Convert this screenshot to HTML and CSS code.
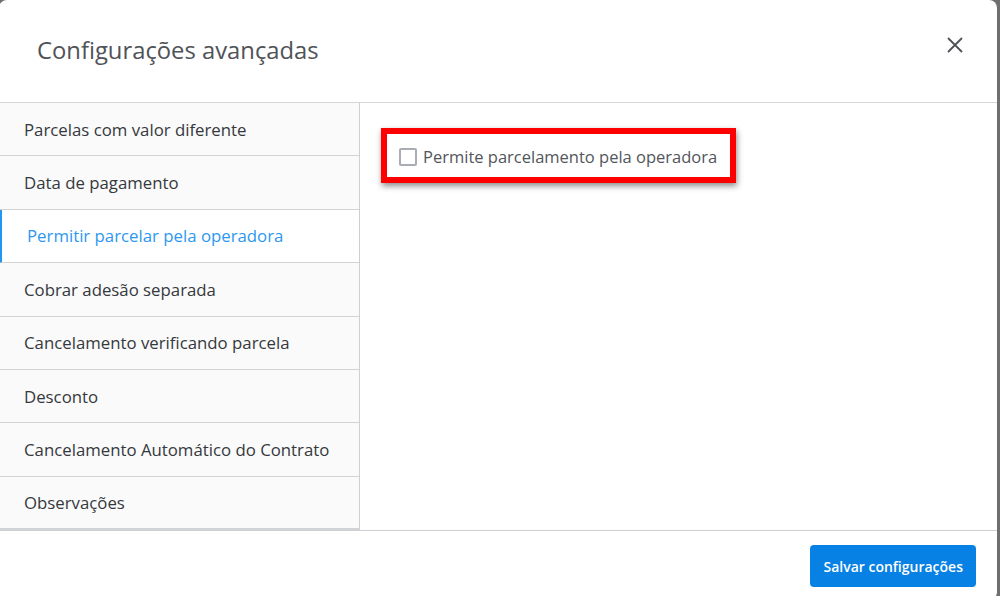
FILE: index.html
```html
<!DOCTYPE html>
<html lang="pt-BR">
<head>
<meta charset="utf-8">
<link rel="stylesheet" href="styles.css">
</head>
<body>
<div class="modal">
  <header class="modal-header">
    <h1 class="modal-title">Configurações avançadas</h1>
    <button class="close" aria-label="Fechar">
      <svg width="16" height="16" viewBox="0 0 16 16"><path d="M1.5 1.5L14.5 14.5M14.5 1.5L1.5 14.5" stroke="#4d5156" stroke-width="1.8" stroke-linecap="round"/></svg>
    </button>
  </header>
  <div class="modal-body">
    <nav class="sidebar">
      <div class="item">Parcelas com valor diferente</div>
      <div class="item">Data de pagamento</div>
      <div class="item active">Permitir parcelar pela operadora</div>
      <div class="item">Cobrar adesão separada</div>
      <div class="item">Cancelamento verificando parcela</div>
      <div class="item">Desconto</div>
      <div class="item">Cancelamento Automático do Contrato</div>
      <div class="item">Observações</div>
    </nav>
    <section class="content">
      <div class="highlight">
        <label class="check"><span class="box"></span>Permite parcelamento pela operadora</label>
      </div>
    </section>
  </div>
  <footer class="modal-footer">
    <button class="btn-primary">Salvar configurações</button>
  </footer>
</div>
</body>
</html>
```

FILE: styles.css
```css
* { box-sizing: border-box; }
html, body { margin: 0; padding: 0; }
body {
  background: #6f6f6f;
  width: 1000px;
  height: 596px;
  overflow: hidden;
  font-family: "Open Sans", "Noto Sans", sans-serif;
}
.modal {
  width: 998px;
  height: 600px;
  margin-left: -1px;
  background: #fff;
  border-radius: 8px;
  display: flex;
  flex-direction: column;
}
.modal-header {
  height: 103px;
  border-bottom: 1px solid #d6d6d6;
  display: flex;
  align-items: center;
  justify-content: space-between;
  padding: 0 34px 2px 38px;
}
.modal-title {
  margin: 0;
  font-size: 23.8px;
  font-weight: 400;
  color: #4f5358;
}
.close {
  border: 0;
  background: none;
  padding: 0;
  width: 16px;
  height: 16px;
  display: flex;
  cursor: pointer;
  margin-top: -10px;
}
.modal-body {
  display: flex;
  height: 428px;
  border-bottom: 1px solid #cfcfcf;
}
.sidebar {
  width: 361px;
  background: #fafafa;
  border-right: 1px solid #cfcfcf;
  display: flex;
  flex-direction: column;
}
.item {
  height: 53.5px;
  border-bottom: 1px solid #d3d3d3;
  display: flex;
  align-items: center;
  padding-left: 25px;
  font-size: 16.8px;
  color: #35383c;
}
.item:last-child { border-bottom: 2px solid #d0d3d8; }
.item.active {
  background: #fff;
  color: #2d97f2;
  border-left: 3px solid #2196f3;
  padding-left: 25px;
}
.content {
  flex: 1;
  padding: 25px 0 0 21px;
}
.highlight {
  display: inline-flex;
  border: 6px solid #ff0000;
  padding: 11px 13px 9px 12px;
  box-shadow: 1px 3px 6px rgba(0,0,0,0.45);
}
.check {
  display: flex;
  align-items: center;
  font-size: 16.5px;
  color: #52565b;
}
.box {
  width: 18px;
  height: 18px;
  border: 2px solid #a9acb2;
  border-radius: 2px;
  margin-right: 6px;
}
.modal-footer {
  flex: 1;
  display: flex;
  justify-content: flex-end;
  padding: 14px 21px 0 0;
}
.btn-primary {
  height: 42px;
  padding: 0 13px;
  background: #0781e3;
  color: #fff;
  border: 0;
  border-radius: 4px;
  font-family: inherit;
  font-size: 14px;
  font-weight: 600;
}
```
